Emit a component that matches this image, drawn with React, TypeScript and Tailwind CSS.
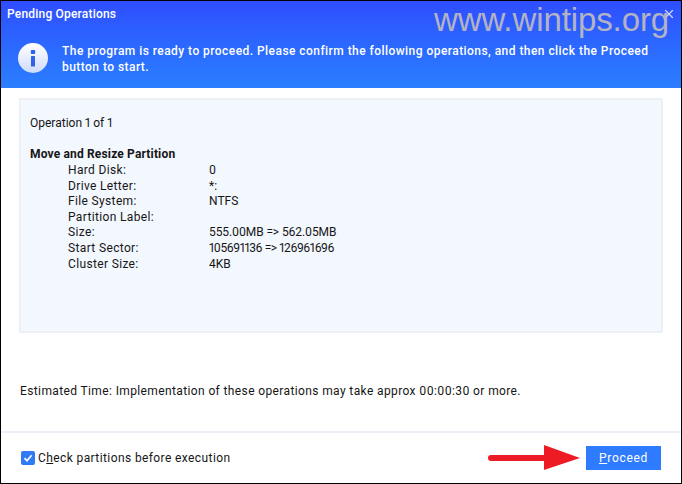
import { X } from "lucide-react";

const details = [
  { label: "Hard Disk:", value: "0", spacing: "" },
  { label: "Drive Letter:", value: "*:", spacing: "" },
  { label: "File System:", value: "NTFS", spacing: "" },
  { label: "Partition Label:", value: "", spacing: "" },
  { label: "Size:", value: "555.00MB => 562.05MB", spacing: "tracking-[-0.1px]" },
  { label: "Start Sector:", value: "105691136 => 126961696", spacing: "tracking-[-0.4px]" },
  { label: "Cluster Size:", value: "4KB", spacing: "" },
];

function InfoIcon() {
  return (
    <svg width="30" height="30" viewBox="0 0 30 30" className="shrink-0">
      <defs>
        <linearGradient id="infoFill" x1="0" y1="0" x2="0" y2="1">
          <stop offset="0" stopColor="#ffffff" />
          <stop offset="1" stopColor="#cfdcf8" />
        </linearGradient>
      </defs>
      <circle cx="15" cy="15" r="15" fill="url(#infoFill)" />
      <rect x="12.8" y="7" width="4.4" height="4" rx="1" fill="#2f62e8" />
      <rect x="13" y="13" width="4" height="10.5" rx="0.5" fill="#2f62e8" />
    </svg>
  );
}

function Arrow() {
  return (
    <svg width="92" height="26" viewBox="0 0 92 26" className="shrink-0">
      <path d="M3 13 H58" stroke="#ed1c24" strokeWidth="6" strokeLinecap="round" />
      <path d="M56 0 L92 13 L56 25 Z" fill="#ed1c24" />
    </svg>
  );
}

export default function App() {
  return (
    <div className="relative flex h-[484px] w-[682px] flex-col overflow-hidden border border-black bg-white font-['Roboto',sans-serif] text-[12px] text-[#161616] proportional-nums">
      <header className="flex h-[87px] flex-col bg-gradient-to-b from-[#2f4dff] to-[#2b7eff] font-medium text-white">
        <div className="flex items-center justify-between pl-[6px] pr-[5px] pt-[4px]">
          <span className="tracking-[0.2px]">Pending Operations</span>
          <X className="h-[14px] w-[14px] text-[#d5d9ee]" strokeWidth={2} />
        </div>
        <div className="flex gap-[14px] pl-[17px] pt-[20px]">
          <InfoIcon />
          <p className="w-[620px] leading-[16px] tracking-[0.45px]">
            The program is ready to proceed. Please confirm the following operations, and then click the Proceed button to start.
          </p>
        </div>
      </header>

      <span className="absolute left-[433px] top-0 font-['Liberation_Sans',sans-serif] text-[33px] leading-[38px] tracking-[-0.1px] text-[#b3b3c4]">
        www.wintips.org
      </span>

      <main className="flex-1 px-[18px] pt-[10px]">
        <section className="h-[235px] border-2 border-[#eceff4] bg-[#f3f7fe] px-[9px] pt-[16px] leading-[15.5px]">
          <p>Operation 1 of 1</p>
          <p className="mt-[15px] font-bold tracking-[0.16px]">Move and Resize Partition</p>
          <dl className="mt-[1px] pl-[38px]">
            {details.map((item) => (
              <div key={item.label} className="flex h-[15.6px]">
                <dt className="w-[141px] tracking-[0.35px]">{item.label}</dt>
                <dd className={item.spacing}>{item.value}</dd>
              </div>
            ))}
          </dl>
        </section>
        <p className="mt-[49px] pl-[1px] tracking-[0.38px]">
          Estimated Time: Implementation of these operations may take approx 00:00:30 or more.
        </p>
      </main>

      <footer className="flex h-[52px] items-center justify-between border-t-2 border-[#eeeef6] pl-[20px] pr-[20px]">
        <label className="flex items-center gap-[3px] tracking-[0.4px]">
          <span className="flex h-[14px] w-[14px] items-center justify-center rounded-[2px] bg-[#2f7bf5]">
            <svg width="10" height="10" viewBox="0 0 10 10">
              <path d="M1.5 5.2 L4 7.8 L8.6 2.2" fill="none" stroke="#fff" strokeWidth="1.7" />
            </svg>
          </span>
          <span>
            C<span className="underline">h</span>eck partitions before execution
          </span>
        </label>
        <div className="flex items-center gap-[6px]">
          <Arrow />
          <button className="h-[24px] w-[75px] bg-[#2f7bff] tracking-[0.7px] text-white">
            <span className="underline">P</span>roceed
          </button>
        </div>
      </footer>
    </div>
  );
}
